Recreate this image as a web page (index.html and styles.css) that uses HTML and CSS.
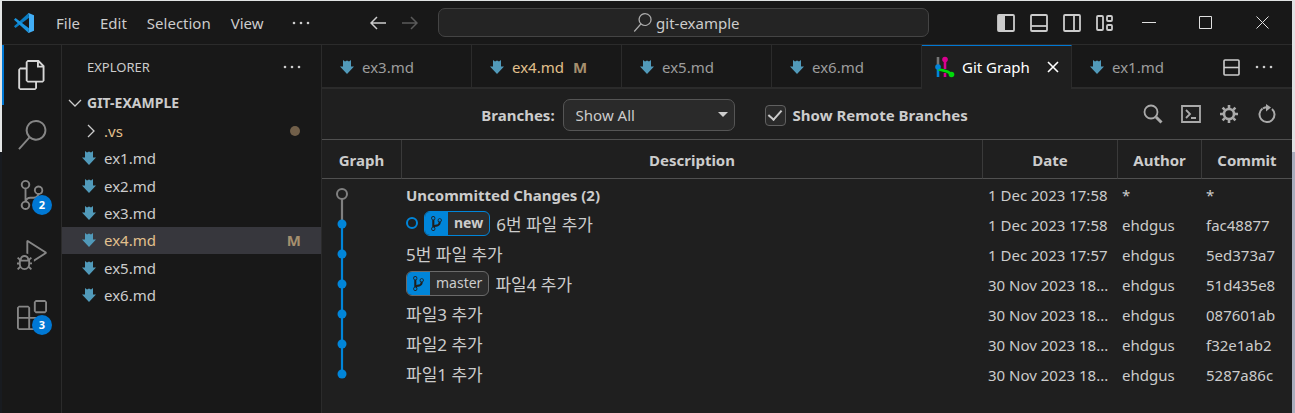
FILE: index.html
```html
<!DOCTYPE html>
<html lang="en">
<head>
<meta charset="utf-8">
<title>git-example</title>
<link rel="stylesheet" href="styles.css">
</head>
<body>
<svg class="defs" aria-hidden="true">
  <symbol id="md" viewBox="0 0 14 16"><path d="M3 1l2 1.4 2-1 2 1L11 1v6.500h3L7 15 0 7.500h3z"/></symbol>
  <symbol id="dots" viewBox="0 0 18 4"><circle cx="2" cy="2" r="1.3"/><circle cx="9" cy="2" r="1.3"/><circle cx="16" cy="2" r="1.3"/></symbol>
  <symbol id="branch" viewBox="0 0 10 16"><path d="M10 5c0-1.110-.89-2-2-2a1.993 1.993 0 0 0-1 3.720v.3c-.02.52-.23.98-.63 1.380-.4.4-.86.61-1.380.63-.83.02-1.480.16-2 .45V4.720a1.993 1.993 0 0 0-1-3.720C.88 1 0 1.890 0 3a2 2 0 0 0 1 1.720v6.560c-.59.35-1 .99-1 1.720 0 1.110.89 2 2 2 1.110 0 2-.89 2-2 0-.53-.2-1-.53-1.360.09-.06.48-.41.59-.47.25-.11.56-.17.94-.17 1.050-.05 1.950-.45 2.750-1.250S8.950 7.770 9 6.730h-.02C9.590 6.370 10 5.730 10 5zM2 1.800c.66 0 1.200.55 1.200 1.200 0 .65-.55 1.200-1.200 1.200C1.350 4.200.8 3.650.8 3c0-.65.55-1.200 1.200-1.200zm0 12.410c-.66 0-1.200-.55-1.200-1.200 0-.65.55-1.200 1.200-1.200.65 0 1.200.55 1.200 1.200 0 .65-.55 1.200-1.200 1.200zm6-8c-.66 0-1.200-.55-1.200-1.200 0-.65.55-1.200 1.200-1.200.65 0 1.200.55 1.200 1.200 0 .65-.55 1.200-1.200 1.200z"/></symbol>
  <symbol id="search" viewBox="0 0 24 24"><path d="M15.250 0a8.250 8.250 0 0 0-6.180 13.720L1 22.880l1.120 1 8.050-9.120A8.251 8.251 0 1 0 15.250.01V0zm0 15a6.750 6.750 0 1 1 0-13.500 6.750 6.750 0 0 1 0 13.500z"/></symbol>
</svg>
<div class="window">
  <header class="titlebar">
    <svg class="logo" viewBox="0 0 20 20" aria-hidden="true">
      <path fill="#0a7dc4" d="M14.600 0 0 13.200l1.500 1.700L15 4.800z"/>
      <path fill="#1995e0" d="M0 6.700 1.500 5.100 15 15.300 14.600 20z"/>
      <path fill="#42aef5" d="M14.600 0 20 2.300V17.700L14.600 20Q13.700 19.500 15 18V2Q13.700.8 14.600 0z"/>
    </svg>
    <nav class="menu">
      <button>File</button><button>Edit</button><button>Selection</button><button>View</button>
      <button aria-label="More menus"><svg class="dots"><use href="#dots"/></svg></button>
    </nav>
    <div class="center">
      <button aria-label="Back"><svg class="arrow" viewBox="0 0 16 14"><path d="M16 7H1M7 1 1 7l6 6"/></svg></button>
      <button aria-label="Forward"><svg class="arrow off" viewBox="0 0 16 14"><path d="M0 7h15M9 1l6 6-6 6"/></svg></button>
      <button class="command"><svg class="command-icon"><use href="#search"/></svg>git-example</button>
    </div>
    <div class="layout">
      <button aria-label="Toggle side bar"><svg viewBox="0 0 18 18"><rect x="1" y="1" width="16" height="16" rx="1"/><path class="solid" d="M1 1h7v16H1z"/></svg></button>
      <button aria-label="Toggle panel"><svg viewBox="0 0 18 18"><rect x="1" y="1" width="16" height="16" rx="1"/><path d="M1 12h16"/></svg></button>
      <button aria-label="Toggle secondary side bar"><svg viewBox="0 0 18 18"><rect x="1" y="1" width="16" height="16" rx="1"/><path d="M11 1v16"/></svg></button>
      <button aria-label="Customize layout"><svg viewBox="0 0 18 18"><rect x="1" y="2" width="6" height="14" rx="1"/><rect x="11" y="2" width="5" height="5" rx="1"/><rect x="11" y="11" width="5" height="5" rx="1"/></svg></button>
    </div>
    <div class="controls">
      <button aria-label="Minimize"><svg viewBox="0 0 14 14"><path d="M0 6.500h14"/></svg></button>
      <button aria-label="Maximize"><svg viewBox="0 0 14 14"><path d="M.5.5h12v12H.5z"/></svg></button>
      <button aria-label="Close window"><svg viewBox="0 0 14 14"><path d="m.5.5 12 12M12.500.5l-12 12"/></svg></button>
    </div>
  </header>

  <div class="body">
    <nav class="activity">
      <button class="active" aria-label="Explorer"><svg viewBox="0 0 24 24"><path d="M17.500 0h-9L7 1.500V6H2.500L1 7.500v15.070L2.500 24h12.070L16 22.570V18h4.700l1.300-1.430V4.500L17.500 0zm0 2.120l2.380 2.380H17.500V2.120zm-3 20.380h-12v-15H7v9.070L8.500 18h6v4.500zm6-6h-12v-15H16V6h4.500v10.500z"/></svg></button>
      <button aria-label="Search"><svg><use href="#search"/></svg></button>
      <button aria-label="Source control"><svg viewBox="0 0 24 24"><path d="M21.007 8.222A3.738 3.738 0 0 0 15.045 5.200a3.737 3.737 0 0 0 1.156 6.583 2.988 2.988 0 0 1-2.668 1.670h-2.990a4.456 4.456 0 0 0-2.989 1.165V7.400a3.737 3.737 0 1 0-1.494 0v9.117a3.776 3.776 0 1 0 1.816.099 2.990 2.990 0 0 1 2.668-1.667h2.990a4.484 4.484 0 0 0 4.223-3.039 3.736 3.736 0 0 0 3.250-3.687zM4.565 3.738a2.242 2.242 0 1 1 4.484 0 2.242 2.242 0 0 1-4.484 0zm4.484 16.441a2.242 2.242 0 1 1-4.484 0 2.242 2.242 0 0 1 4.484 0zm8.221-9.715a2.242 2.242 0 1 1 0-4.485 2.242 2.242 0 0 1 0 4.485z"/></svg><span class="badge">2</span></button>
      <button aria-label="Run and debug"><svg viewBox="0 0 24 24"><path d="M10.940 13.500l-1.320 1.320a3.730 3.730 0 0 0-7.240 0L1.060 13.500 0 14.560l1.720 1.720-.22.22V18H0v1.500h1.500v.08c.077.489.214.966.41 1.420L0 22.940 1.060 24l1.650-1.650A4.308 4.308 0 0 0 6 24a4.310 4.310 0 0 0 3.290-1.650L10.940 24 12 22.940 10.090 21c.198-.464.336-.951.41-1.450v-.1H12V18h-1.500v-1.500l-.22-.22L12 14.560l-1.060-1.060zM6 13.500a2.250 2.250 0 0 1 2.250 2.250h-4.500A2.250 2.250 0 0 1 6 13.500zm3 6a3.330 3.330 0 0 1-3 3 3.330 3.330 0 0 1-3-3v-2.250h6v2.250zm14.760-9.900v1.260L13.500 17.370V15.600l8.500-5.370L9 2v9.460a5.070 5.070 0 0 0-1.500-.72V.63L8.640 0l15.120 9.600z"/></svg></button>
      <button aria-label="Extensions"><svg viewBox="0 0 24 24"><path d="M13.500 1.500L15 0h7.500L24 1.500V9l-1.500 1.500H15L13.500 9V1.500zm1.500 0V9h7.500V1.500H15zM0 15V6l1.500-1.500H9L10.500 6v7.500H18l1.500 1.500v7.500L18 24H1.500L0 22.500V15zm9-1.500V6H1.500v7.500H9zM9 15H1.500v7.500H9V15zm1.500 7.500H18V15h-7.500v7.500z"/></svg><span class="badge">3</span></button>
    </nav>

    <aside class="sidebar">
      <div class="side-title"><span>EXPLORER</span><button aria-label="More actions"><svg class="dots"><use href="#dots"/></svg></button></div>
      <button class="section"><svg class="chevron" viewBox="0 0 14 14"><path d="m1 4 6 6 6-6"/></svg>GIT-EXAMPLE</button>
      <div class="tree">
        <button class="modified"><svg class="chevron" viewBox="0 0 14 14"><path d="m4 1 6 6-6 6"/></svg><span>.vs</span><i class="dot"></i></button>
        <button><svg class="md"><use href="#md"/></svg><span>ex1.md</span></button>
        <button><svg class="md"><use href="#md"/></svg><span>ex2.md</span></button>
        <button><svg class="md"><use href="#md"/></svg><span>ex3.md</span></button>
        <button class="modified selected"><svg class="md"><use href="#md"/></svg><span>ex4.md</span><b class="status">M</b></button>
        <button><svg class="md"><use href="#md"/></svg><span>ex5.md</span></button>
        <button><svg class="md"><use href="#md"/></svg><span>ex6.md</span></button>
      </div>
    </aside>

    <main class="editor">
      <div class="tabbar">
        <div class="tabs">
          <button class="tab"><svg class="md"><use href="#md"/></svg>ex3.md</button>
          <button class="tab modified"><svg class="md"><use href="#md"/></svg>ex4.md<b class="status">M</b></button>
          <button class="tab"><svg class="md"><use href="#md"/></svg>ex5.md</button>
          <button class="tab"><svg class="md"><use href="#md"/></svg>ex6.md</button>
          <button class="tab current">
            <svg class="graph-icon" viewBox="0 0 20 22"><path stroke="#777" d="M3 1v9"/><path stroke="#0085d9" d="M3 11v10"/><path stroke="#d9008f" d="M10 3v10M10 17v4"/><path stroke="#00d90a" d="M3 13c5 2 9 1 13 5"/><circle cx="3" cy="11" r="2.800" fill="#0085d9"/><circle cx="10" cy="3.500" r="2.800" fill="#d9008f"/><circle cx="16.500" cy="18.500" r="2.800" fill="#00d90a"/></svg>Git Graph
            <svg class="close" viewBox="0 0 12 12"><path d="m1 1 10 10M11 1 1 11"/></svg></button>
          <button class="tab last"><svg class="md"><use href="#md"/></svg>ex1.md</button>
        </div>
        <div class="tab-actions">
          <button aria-label="Split editor"><svg class="split" viewBox="0 0 17 17"><rect x="1" y="1" width="15" height="15" rx="1"/><path d="M1 8.500h15"/></svg></button>
          <button aria-label="More actions"><svg class="dots"><use href="#dots"/></svg></button>
        </div>
      </div>

      <div class="toolbar">
        <div class="filters">
          <label for="branches">Branches:</label>
          <div class="select"><select id="branches"><option>Show All</option></select><svg viewBox="0 0 10 5"><path d="M0 0h10L5 5z"/></svg></div>
          <input id="remote" type="checkbox" checked><label for="remote">Show Remote Branches</label>
        </div>
        <div class="tools">
          <button aria-label="Find"><svg viewBox="0 0 20 20"><circle cx="8" cy="8" r="6.500"/><path class="thick" d="m13 13 5.500 5.500"/></svg></button>
          <button aria-label="Terminal"><svg viewBox="0 0 20 20"><path d="M1 2h18v16H1zM5 6l4 4-4 4M10 14h5"/></svg></button>
          <button aria-label="Settings"><svg viewBox="0 0 20 20"><circle class="gear" cx="10" cy="10" r="5"/><path class="teeth" d="M10 1v3M10 16v3M1 10h3M16 10h3M3.600 3.600l2.200 2.200M14.200 14.200l2.200 2.200M3.600 16.400l2.200-2.200M14.200 5.800l2.200-2.200"/></svg></button>
          <button aria-label="Refresh"><svg viewBox="0 0 20 20"><path class="round" d="M5.500 4.500a7.500 7.500 0 1 0 9.500.4M6 4.300Q8.500 3 11 3.300"/><path class="tip" d="M9 0l5 3.600L9 7.500z"/></svg></button>
        </div>
      </div>

      <table class="commits">
        <colgroup><col class="c-graph"><col><col class="c-date"><col class="c-author"><col class="c-commit"></colgroup>
        <thead><tr><th>Graph</th><th>Description</th><th>Date</th><th>Author</th><th>Commit</th></tr></thead>
        <tbody>
          <tr>
            <td class="graph" rowspan="7"><svg viewBox="0 0 80 210"><path stroke="#808080" d="M20 15v30"/><path stroke="#0085d9" d="M20 45v150"/><circle cx="20" cy="15" r="5" fill="#1f1f1f" stroke="#808080"/><g fill="#0085d9"><circle cx="20" cy="45" r="4.500"/><circle cx="20" cy="75" r="4.500"/><circle cx="20" cy="105" r="4.500"/><circle cx="20" cy="135" r="4.500"/><circle cx="20" cy="165" r="4.500"/><circle cx="20" cy="195" r="4.500"/></g></svg></td>
            <td><b>Uncommitted Changes (2)</b></td><td class="date">1 Dec 2023 17:58</td><td>*</td><td>*</td></tr>
          <tr><td><div class="desc"><i class="head"></i><span class="ref on"><svg><use href="#branch"/></svg><span>new</span></span><span class="ko" lang="ko">6번 파일 추가</span></div></td><td class="date">1 Dec 2023 17:58</td><td>ehdgus</td><td>fac48877</td></tr>
          <tr><td><span class="ko" lang="ko">5번 파일 추가</span></td><td class="date">1 Dec 2023 17:57</td><td>ehdgus</td><td>5ed373a7</td></tr>
          <tr><td><div class="desc"><span class="ref"><svg><use href="#branch"/></svg><span>master</span></span><span class="ko" lang="ko">파일4 추가</span></div></td><td class="date">30 Nov 2023 18...</td><td>ehdgus</td><td>51d435e8</td></tr>
          <tr><td><span class="ko" lang="ko">파일3 추가</span></td><td class="date">30 Nov 2023 18...</td><td>ehdgus</td><td>087601ab</td></tr>
          <tr><td><span class="ko" lang="ko">파일2 추가</span></td><td class="date">30 Nov 2023 18...</td><td>ehdgus</td><td>f32e1ab2</td></tr>
          <tr><td><span class="ko" lang="ko">파일1 추가</span></td><td class="date">30 Nov 2023 18...</td><td>ehdgus</td><td>5287a86c</td></tr>
        </tbody>
      </table>
    </main>
  </div>
</div>
</body>
</html>
```
FILE: styles.css
```css
* { box-sizing: border-box; }
body {
  margin: 0;
  min-height: 100vh;
  display: flex;
  padding: 1px 3px 0 2px;
  background: linear-gradient(#e0e3e3 0 1px, transparent 1px),
    linear-gradient(to right, transparent 50%, #e0e1e3 50%) top / 100% 152px no-repeat,
    linear-gradient(to right, #e4e6e6 50%, transparent 50%) top / 100% 152px no-repeat,
    linear-gradient(to right, #181b20 50%, #a9adbd 50%);
  font-family: "Noto Sans", "Noto Sans CJK KR", sans-serif;
  font-size: 15px;
  line-height: 20px;
  color: #ccc;
}
button, select, input { font: inherit; color: inherit; margin: 0; }
button { display: flex; align-items: center; padding: 0; border: 0; background: none; white-space: nowrap; }
svg { display: block; flex: none; fill: currentColor; }
.defs { position: absolute; width: 0; height: 0; }
.window { flex: 1; min-width: 0; display: flex; flex-direction: column; background: #181818; }
.dots { width: 18px; height: 4px; }
.md { width: 14px; height: 16px; fill: #519aba; }
.status { color: #a58f6e; }

.titlebar { display: flex; align-items: center; height: 44px; border-bottom: 1px solid #2b2b2b; padding-left: 12px; }
.logo { width: 20px; height: 20px; }
.menu { display: flex; gap: 20px; padding-left: 22px; }
.menu .dots { margin-left: 8px; }
.center { flex: 1; display: flex; gap: 16px; padding: 0 68px 0 60px; }
.arrow { width: 16px; height: 14px; fill: none; stroke: currentColor; stroke-width: 1.5; }
.off { color: #5a5a5a; }
.command { flex: 1; justify-content: center; gap: 4px; height: 29px; margin-left: 4px; padding-left: 6px; border: 1px solid #444; border-radius: 7px; background: #242424; }
.command-icon { width: 19px; height: 19px; color: #aaa; }
.layout { display: flex; gap: 15px; }
.layout svg { width: 18px; height: 18px; fill: none; stroke: currentColor; stroke-width: 1.8; }
.layout .solid { fill: currentColor; stroke: none; }
.controls { display: flex; gap: 43px; padding: 0 22px 0 28px; }
.controls svg { width: 14px; height: 14px; fill: none; stroke: #e0e0e0; stroke-width: 1; }

.body { flex: 1; display: flex; min-width: 0; }
.activity { width: 60px; border-right: 1px solid #2b2b2b; color: #868686; }
.activity button { position: relative; width: 100%; height: 60px; justify-content: center; }
.activity svg { width: 30px; height: 30px; }
.activity .active { color: #d7d7d7; border-left: 2px solid #0078d4; padding-right: 2px; }
.badge { position: absolute; right: 9px; top: 30px; width: 20px; height: 20px; border-radius: 50%; background: #0078d4; color: #fff; font-size: 11px; font-weight: 700; }

.sidebar { width: 260px; border-right: 1px solid #2b2b2b; }
.side-title { display: flex; align-items: center; justify-content: space-between; height: 44px; padding: 0 20px 0 25px; font-size: 13px; }
.section { gap: 5px; height: 28px; padding-left: 6px; font-size: 14px; font-weight: 700; }
.chevron { width: 14px; height: 14px; fill: none; stroke: #ccc; stroke-width: 1.3; }
.tree { display: grid; grid-template-rows: repeat(7, 1fr); height: 192px; }
.tree button { gap: 8px; padding: 0 20px 0 20px; }
.tree .chevron { margin-left: 2px; margin-right: -2px; }
.modified { color: #e2c08d; }
.selected { background: #37373d; }
.tree span { flex: 1; text-align: left; }
.dot { width: 10px; height: 10px; margin-right: 1px; border-radius: 50%; background: #715f49; }

.editor { flex: 1; min-width: 0; background: #1f1f1f; }
.tabbar { display: flex; height: 44px; background: linear-gradient(#181818 42px, #2b2b2b 42px); }
.tabs { flex: 1; display: flex; }
.tab { width: 150px; height: 42px; gap: 8px; padding: 1px 0 0 18px; border-right: 1px solid #2b2b2b; color: #9d9d9d; }
.tab.modified { color: #e2c08d; }
.tab .status { margin-left: 1px; }
.tab.current { height: 44px; padding: 0 0 2px 13px; gap: 7px; color: #fff; background: #1f1f1f; border-top: 1px solid #0078d4; }
.tab.last { border-right: 0; }
.graph-icon { width: 20px; height: 22px; fill: none; stroke-width: 2.6; }
.graph-icon circle { stroke: none; }
.close { width: 12px; height: 12px; margin-left: 10px; stroke: currentColor; stroke-width: 1.6; }
.tab-actions { display: flex; gap: 15px; padding-right: 19px; }
.split { width: 17px; height: 17px; fill: none; stroke: currentColor; stroke-width: 1.6; }

.toolbar { display: flex; align-items: center; height: 51px; border-bottom: 1px solid #505050; padding-right: 15px; font-weight: 700; }
.filters { flex: 1; display: flex; align-items: center; justify-content: center; padding: 2px 16px 0 0; }
.select { position: relative; margin: 0 30px 0 8px; }
.select svg { position: absolute; right: 7px; top: 13px; width: 10px; height: 5px; }
.select select { appearance: none; display: block; width: 172px; height: 32px; padding: 0 12px; border: 1px solid #555; border-radius: 7px; background: #2a2a2a; font-weight: 400; }
input { appearance: none; display: grid; place-items: center; width: 21px; height: 21px; margin-right: 7px; border: 1px solid #606060; border-radius: 4px; background: #2a2a2a; }
input:checked::before { content: ""; width: 6px; height: 11px; margin-bottom: 3px; border: solid #ccc; border-width: 0 2px 2px 0; transform: rotate(42deg); }
.tools { display: flex; gap: 18px; color: #aaa; }
.tools svg { width: 20px; height: 20px; fill: none; stroke: currentColor; stroke-width: 1.8; }
.tools .thick { stroke-width: 3; }
.tools .teeth, .tools .gear { stroke-width: 2.6; }
.tools .round { stroke-width: 2; }
.tools .tip { fill: currentColor; stroke: none; }

.commits { width: 100%; table-layout: fixed; border-collapse: separate; border-spacing: 0; }
.c-graph { width: 80px; }
.c-date { width: 135px; }
.c-author { width: 84px; }
.c-commit { width: 90px; }
th { height: 39px; padding: 2px 0 0; border-right: 1px solid #3a3a3a; border-bottom: 1px solid #505050; }
th:last-child { border-right: 0; }
td { height: 30px; padding: 1px 4px 0; overflow: hidden; text-overflow: ellipsis; white-space: nowrap; }
td.date { padding-left: 5px; }
td.graph { padding: 0; }
.graph svg { width: 80px; height: 210px; fill: none; stroke-width: 2; }
.graph path { stroke-width: 2.2; }
.ko { font-size: 17px; }
.desc { display: flex; align-items: center; }
.head { width: 12px; height: 12px; margin: -3px 6px 0 0; border: 2px solid #0085d9; border-radius: 50%; }
.ref { display: flex; align-items: center; height: 25px; margin: -3px 6px 0 0; border: 1px solid #6a6a6a; border-radius: 6px; overflow: hidden; background: #2c2c2c; font-size: 14px; }
.ref svg { width: 23px; height: 25px; padding: 4px 6px; background: #0085d9; color: #1f1f1f; }
.ref span { padding: 0 6px; }
.on { border-color: #0085d9; font-weight: 700; }
```
